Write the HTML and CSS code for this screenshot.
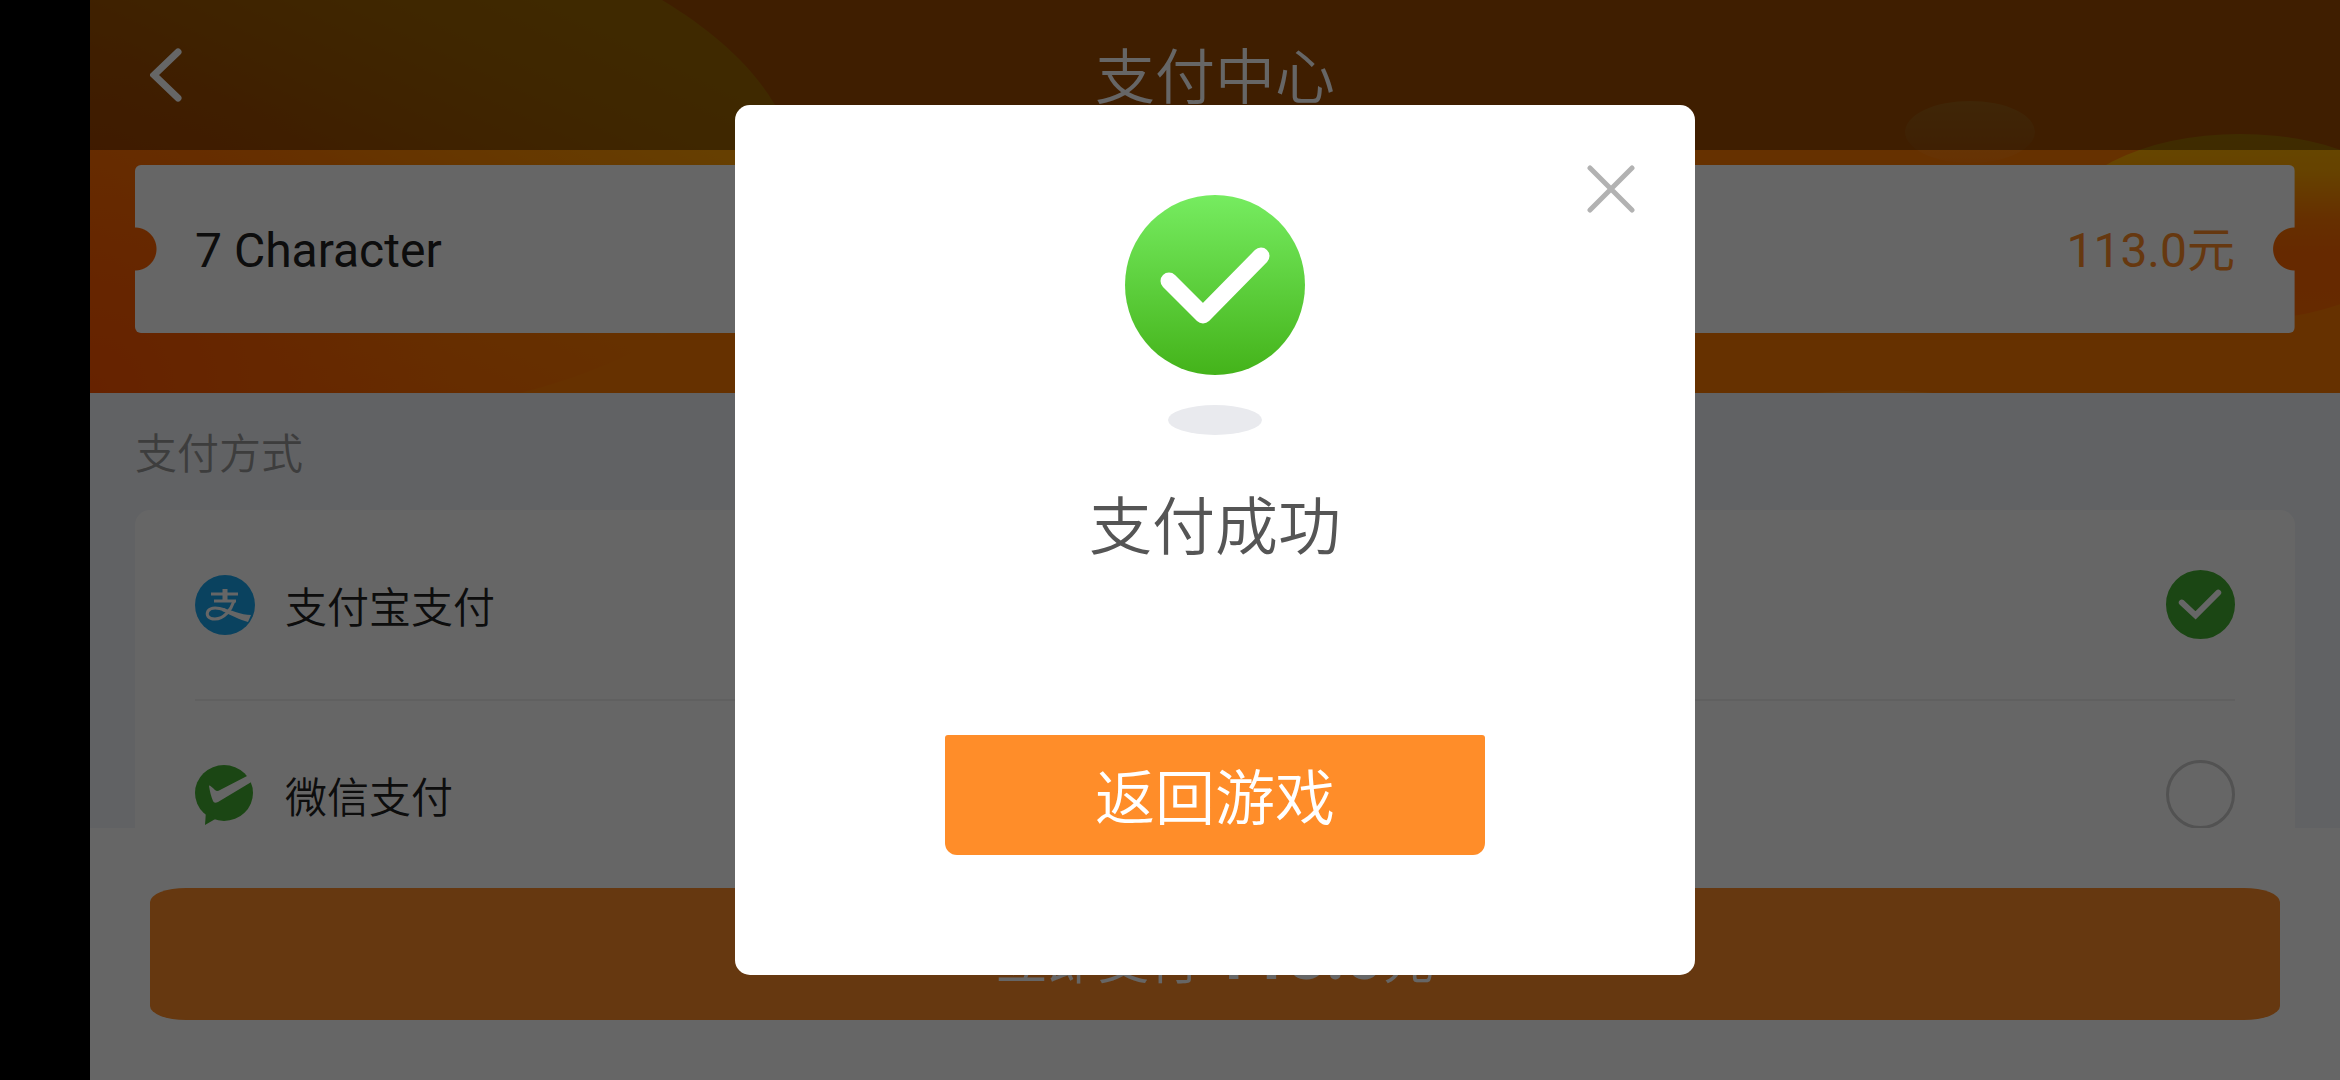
FILE: index.html
```
<!DOCTYPE html>
<html lang="zh-CN">
<head>
  <meta charset="UTF-8">
  <meta name="viewport" content="width=device-width, initial-scale=1.0">
  <title>支付中心</title>
  <link rel="stylesheet" href="styles.css">
</head>
<body>
  <div class="app">
    <div class="banner">
      <svg class="banner-bg" viewBox="0 0 2250 393" preserveAspectRatio="none" aria-hidden="true">
        <defs>
          <linearGradient id="blobLeft" gradientUnits="userSpaceOnUse" x1="500" y1="0" x2="300" y2="420">
            <stop offset="0" stop-color="#ffa800"/>
            <stop offset="0.2" stop-color="#ff9c04"/>
            <stop offset="0.55" stop-color="#ff7e00"/>
            <stop offset="1" stop-color="#ff6a00"/>
          </linearGradient>
          <linearGradient id="blobRight" x1="0" y1="0" x2="0" y2="1">
            <stop offset="0" stop-color="#ffb400"/>
            <stop offset="0.2" stop-color="#ffa600"/>
            <stop offset="0.45" stop-color="#ff7800"/>
            <stop offset="0.65" stop-color="#ff6600"/>
            <stop offset="1" stop-color="#ff6a00"/>
          </linearGradient>
          <linearGradient id="blobSmall" x1="0" y1="0" x2="0" y2="1">
            <stop offset="0" stop-color="#ff9a20"/>
            <stop offset="1" stop-color="#ff7c08"/>
          </linearGradient>
          <radialGradient id="glow" gradientUnits="userSpaceOnUse" cx="0" cy="393" r="360">
            <stop offset="0" stop-color="#ff5000" stop-opacity="0.8"/>
            <stop offset="1" stop-color="#ff5c00" stop-opacity="0"/>
          </radialGradient>
        </defs>
        <rect width="2250" height="393" fill="#ff7a00"/>
        <path d="M0 0H572C632 36 674 78 694 122C740 240 600 350 430 393H0Z" fill="url(#blobLeft)"/>
        <rect width="400" height="393" fill="url(#glow)"/>
        <ellipse cx="1880" cy="132" rx="65" ry="31" fill="url(#blobSmall)"/>
        <ellipse cx="2150" cy="227" rx="180" ry="93" fill="url(#blobRight)"/>
        <ellipse cx="1785" cy="450" rx="190" ry="60" fill="#ff8a14"/>
      </svg>
      <header class="header">
        <button class="back-btn" aria-label="返回">
          <svg viewBox="0 0 32 54"><path d="M28 4L4 27L28 50"/></svg>
        </button>
        <h1>支付中心</h1>
      </header>
      <div class="ticket">
        <span>7 Character</span>
        <span class="price">113.0元</span>
      </div>
    </div>

    <main class="content">
      <h2>支付方式</h2>
      <div class="methods">
        <label class="method">
          <svg class="method-icon" viewBox="0 0 60 60" aria-hidden="true">
            <circle cx="30" cy="30" r="30" fill="#1ba6ee"/>
            <g fill="none" stroke="#fff" stroke-width="3">
              <path d="M16 19H43M19 26H41" />
              <path d="M30 14V26" stroke-width="5"/>
              <path d="M39 26C36 35 29 44 20 44C13 44 11 40 13 36C16 32 24 33 30 35"/>
            </g>
            <path d="M28 33C36 35 46 40 56 40L53 47C45 45 36 40 27 36Z" fill="#fff"/>
          </svg>
          <span class="method-name">支付宝支付</span>
          <span class="radio">
            <input type="radio" name="pay" checked>
            <svg viewBox="0 0 70 70" aria-hidden="true"><path d="M16 33L30 46L53 23"/></svg>
          </span>
        </label>
        <label class="method">
          <svg class="method-icon" viewBox="0 0 60 60" aria-hidden="true">
            <ellipse cx="29" cy="28" rx="29" ry="28" fill="#44b032"/>
            <path d="M11 46L10 60L22 53Z" fill="#44b032"/>
            <path d="M14 21C15 27 16 31 18 36Q19 39 23 37L58 16L54 10L25 25Q22 27 20 25Q14 19 14 21Z" fill="#fff"/>
          </svg>
          <span class="method-name">微信支付</span>
          <span class="radio">
            <input type="radio" name="pay">
            <svg viewBox="0 0 70 70" aria-hidden="true"><path d="M16 33L30 46L53 23"/></svg>
          </span>
        </label>
      </div>
    </main>

    <footer class="footer">
      <button class="pay-btn">立即支付 <b>113.0</b>元</button>
    </footer>
  </div>

  <div class="mask">
    <div class="dialog" role="dialog" aria-modal="true" aria-labelledby="result">
      <button class="close-btn" aria-label="关闭">
        <svg viewBox="0 0 48 48"><path d="M3 3L45 45M45 3L3 45"/></svg>
      </button>
      <svg class="success-icon" viewBox="0 0 180 240" aria-hidden="true">
        <defs>
          <linearGradient id="green" x1="0" y1="0" x2="0" y2="1">
            <stop offset="0" stop-color="#76ec60"/>
            <stop offset="1" stop-color="#44b31a"/>
          </linearGradient>
        </defs>
        <circle cx="90" cy="90" r="90" fill="url(#green)"/>
        <path d="M44 86L78 120L136 61" fill="none" stroke="#fff" stroke-width="17" stroke-linecap="round" stroke-linejoin="round"/>
        <ellipse cx="90" cy="225" rx="47" ry="15" fill="#e9eaee"/>
      </svg>
      <p class="result" id="result">支付成功</p>
      <button class="return-btn">返回游戏</button>
    </div>
  </div>
</body>
</html>
```
FILE: styles.css
```
* {
  box-sizing: border-box;
}

body {
  margin: 0;
  padding-left: 90px;
  background-color: #000;
  font-family: Roboto, "Noto Sans CJK SC", sans-serif;
  color: #222;
}

h1, h2, p {
  margin: 0;
  font-weight: 350;
}

button {
  padding: 0;
  border: none;
  background: none;
  font-family: inherit;
  font-weight: 350;
  color: #fff;
  cursor: pointer;
}

svg {
  display: block;
}

.app {
  display: flex;
  flex-direction: column;
  height: 100vh;
  background-color: #f3f5fa;
}

/* top banner */
.banner {
  position: relative;
  padding-bottom: 60px;
}

.banner-bg {
  position: absolute;
  top: 0;
  left: 0;
  width: 100%;
  height: 100%;
}

.header {
  position: relative;
  display: grid;
  grid-template-columns: 120px 1fr 120px;
  align-items: center;
  height: 150px;
  background-color: rgba(0, 0, 0, 0.38);
}

.header h1 {
  padding-top: 8px;
  font-size: 60px;
  line-height: 90px;
  color: #fff;
  text-align: center;
}

.back-btn {
  padding-left: 60px;
}

.back-btn svg {
  width: 32px;
  height: 54px;
  fill: none;
  stroke: #fff;
  stroke-width: 7;
  stroke-linecap: round;
}

.ticket {
  position: relative;
  display: flex;
  justify-content: space-between;
  align-items: center;
  height: 168px;
  margin: 15px 45px 0;
  padding: 4px 60px 0;
  border-radius: 6px;
  font-size: 48px;
  line-height: 60px;
  background:
    radial-gradient(circle at 0 50%, transparent 21px, #fff 22px) left / 51% 100% no-repeat,
    radial-gradient(circle at 100% 50%, transparent 21px, #fff 22px) right / 51% 100% no-repeat;
}

.price {
  color: #ff8d29;
}

/* payment methods */
.content {
  flex: 1;
  min-height: 0;
  padding: 0 45px;
  overflow-y: auto;
  scrollbar-width: none;
}

.content h2 {
  padding: 32px 0 25px;
  font-size: 42px;
  line-height: 60px;
  color: #999;
}

.methods {
  padding: 0 60px;
  border-radius: 15px;
  background-color: #fff;
}

.method {
  display: flex;
  align-items: center;
  height: 189px;
  font-size: 42px;
  line-height: 60px;
}

.method + .method {
  border-top: 2px solid #f0f0f0;
}

.method-icon {
  width: 60px;
  height: 60px;
}

.method-name {
  flex: 1;
  margin-left: 30px;
  padding-top: 8px;
  font-weight: 350;
}

.radio {
  display: grid;
}

.radio input,
.radio svg {
  grid-area: 1 / 1;
  width: 69px;
  height: 69px;
  margin: 0;
}

.radio input {
  appearance: none;
  border: 3px solid #ccc;
  border-radius: 50%;
}

.radio input:checked {
  border-color: #44b032;
  background-color: #44b032;
}

.radio svg {
  fill: none;
  stroke: none;
  stroke-width: 6;
  stroke-linecap: round;
  pointer-events: none;
}

.radio input:checked + svg {
  stroke: #fff;
}

.footer {
  padding: 60px;
  background-color: #fff;
}

.pay-btn {
  display: block;
  width: 100%;
  height: 132px;
  padding-top: 4px;
  border-radius: 36px / 14px;
  background-color: #ff8d29;
  font-size: 51px;
}

.pay-btn b {
  font-size: 66px;
  font-weight: 700;
}

/* result dialog */
.mask {
  position: fixed;
  inset: 0 0 0 90px;
  display: flex;
  justify-content: center;
  align-items: center;
  background-color: rgba(0, 0, 0, 0.6);
}

.dialog {
  position: relative;
  display: flex;
  flex-direction: column;
  align-items: center;
  width: 960px;
  padding: 90px 60px 120px;
  border-radius: 15px;
  background-color: #fff;
}

.close-btn {
  position: absolute;
  top: 60px;
  right: 60px;
}

.close-btn svg {
  width: 48px;
  height: 48px;
  fill: none;
  stroke: #b2b2b2;
  stroke-width: 5;
  stroke-linecap: round;
}

.success-icon {
  width: 180px;
  height: 240px;
}

.result {
  margin-top: 48px;
  font-size: 63px;
  line-height: 90px;
  color: #555;
}

.return-btn {
  width: 540px;
  height: 120px;
  margin-top: 162px;
  padding-bottom: 3px;
  border-radius: 3px 3px 12px 12px;
  background-color: #ff8d29;
  font-size: 60px;
}
```
